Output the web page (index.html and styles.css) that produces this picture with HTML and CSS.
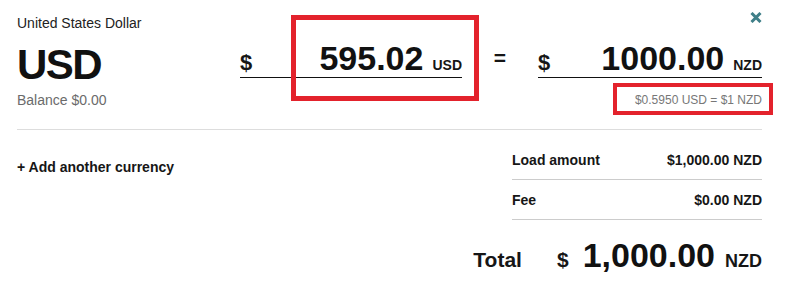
FILE: index.html
```html
<!DOCTYPE html>
<html lang="en">
<head>
<meta charset="utf-8">
<title>Currency load</title>
<link rel="stylesheet" href="styles.css">
</head>
<body>
<div class="panel">
  <button class="close" aria-label="Remove currency">
    <svg width="12" height="11" viewBox="0 0 12 11"><path d="M1.5 1 L10.5 10 M10.5 1 L1.5 10" stroke="#3f7f88" stroke-width="3" fill="none"/></svg>
  </button>

  <div class="top">
    <div class="currency">
      <div class="cur-name">United States Dollar</div>
      <div class="cur-code">USD</div>
      <div class="balance">Balance $0.00</div>
    </div>

    <div class="field field-from">
      <span class="sym">$</span>
      <span class="value"><span class="amt">595.02</span><span class="unit">USD</span></span>
    </div>

    <div class="eq">=</div>

    <div class="to-col">
      <div class="field field-to">
        <span class="sym">$</span>
        <span class="value"><span class="amt">1000.00</span><span class="unit">NZD</span></span>
      </div>
      <div class="rate">$0.5950 USD = $1 NZD</div>
    </div>
  </div>

  <div class="divider"></div>

  <div class="bottom">
    <div class="add">+ Add another currency</div>
    <div class="summary">
      <div class="row"><span>Load amount</span><span>$1,000.00 NZD</span></div>
      <div class="row"><span>Fee</span><span>$0.00 NZD</span></div>
    </div>
  </div>

  <div class="total">
    <span class="total-label">Total</span>
    <span class="total-sym">$</span>
    <span class="total-amt">1,000.00</span>
    <span class="total-unit">NZD</span>
  </div>

  <div class="mark mark-amount"></div>
  <div class="mark mark-rate"></div>
</div>
</body>
</html>
```

FILE: styles.css
```css
* { box-sizing: border-box; }

html, body {
  margin: 0;
  padding: 0;
  background: #ffffff;
}

body {
  font-family: "Liberation Sans", Arial, Helvetica, sans-serif;
  color: #161616;
}

.panel {
  position: relative;
  width: 793px;
  height: 302px;
  padding: 0 31px 0 17px;
  overflow: hidden;
}

.close {
  position: absolute;
  top: 12px;
  left: 750px;
  width: 12px;
  height: 11px;
  padding: 0;
  border: 0;
  background: none;
  display: block;
}
.close svg { display: block; }

.top {
  display: flex;
  align-items: flex-start;
}

.currency {
  width: 223px;
  flex: none;
  padding-top: 15px;
}

.cur-name {
  font-size: 14px;
  line-height: 16px;
  color: #222;
}

.cur-code {
  margin-top: 12px;
  font-size: 42px;
  line-height: 44px;
  font-weight: 700;
  letter-spacing: -1.5px;
  color: #111;
}

.balance {
  margin-top: 5px;
  font-size: 14px;
  line-height: 16px;
  color: #6b6b6b;
}

.field {
  display: flex;
  align-items: baseline;
  border-bottom: 1px solid #111;
  padding-bottom: 2px;
}

.field-from {
  width: 222px;
  flex: none;
  margin-top: 41px;
}

.to-col {
  width: 224px;
  flex: none;
  margin-top: 41px;
  display: flex;
  flex-direction: column;
  align-items: flex-end;
}

.field-to { width: 224px; }

.sym {
  font-size: 22px;
  line-height: 1;
  font-weight: 700;
}

.value {
  margin-left: auto;
  display: flex;
  align-items: baseline;
}

.amt {
  font-size: 34px;
  line-height: 34px;
  font-weight: 700;
  color: #111;
}

.unit {
  margin-left: 9px;
  font-size: 14px;
  line-height: 1;
  font-weight: 700;
}

.eq {
  width: 76px;
  flex: none;
  text-align: center;
  margin-top: 41px;
  font-size: 21px;
  line-height: 34px;
  font-weight: 700;
}

.rate {
  margin-top: 15px;
  font-size: 12px;
  line-height: 14px;
  color: #777;
}

.divider {
  margin-top: 21px;
  height: 1px;
  background: #dddddd;
}

.bottom {
  margin-top: 10px;
  display: flex;
  justify-content: space-between;
  align-items: flex-start;
}

.add {
  margin-top: 19px;
  font-size: 14px;
  line-height: 16px;
  font-weight: 700;
}

.summary {
  width: 250px;
  flex: none;
}

.row {
  display: flex;
  justify-content: space-between;
  padding: 12px 0 11px;
  font-size: 14px;
  line-height: 16px;
  font-weight: 700;
  border-bottom: 1px solid #cccccc;
}

.total {
  margin-top: 18px;
  display: flex;
  justify-content: flex-end;
  align-items: baseline;
  font-weight: 700;
}

.total-label {
  font-size: 21px;
  line-height: 1;
  margin-right: 35px;
}

.total-sym {
  font-size: 21px;
  line-height: 1;
  margin-right: 14px;
}

.total-amt {
  font-size: 34px;
  line-height: 34px;
  color: #111;
}

.total-unit {
  margin-left: 10px;
  font-size: 18px;
  line-height: 1;
}

.mark {
  position: absolute;
  border-style: solid;
  border-color: #e3222c;
  pointer-events: none;
}

.mark-amount {
  left: 291px;
  top: 15px;
  width: 188px;
  height: 86px;
  border-width: 5px;
}

.mark-rate {
  left: 613px;
  top: 83px;
  width: 160px;
  height: 32px;
  border-width: 4px;
}
```
